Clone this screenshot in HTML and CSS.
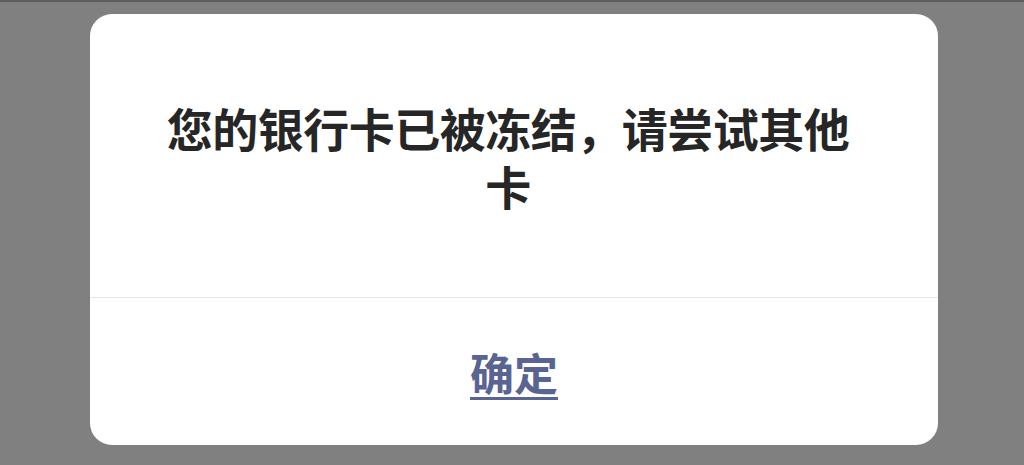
FILE: index.html
```html
<!DOCTYPE html>
<html lang="zh-CN">
<head>
<meta charset="utf-8">
<title>提示</title>
<link rel="stylesheet" href="styles.css">
</head>
<body>
<div class="screen">
  <div class="dialog">
    <div class="dialog-body">
      <p class="message">您的银行卡已被冻结，请尝试其他卡</p>
    </div>
    <div class="dialog-footer">
      <a class="confirm" href="#">确定</a>
    </div>
  </div>
</div>
</body>
</html>
```

FILE: styles.css
```css
html, body {
  margin: 0;
  padding: 0;
  height: 100%;
  background: #808080;
}
body {
  font-family: "Noto Sans CJK SC", "Noto Sans", sans-serif;
  border-top: 2px solid #5e5e5e;
  box-sizing: border-box;
}
.screen {
  padding: 12px 0 0 90px;
}
.dialog {
  width: 848px;
  height: 431px;
  background: #ffffff;
  border-radius: 22px;
  display: flex;
  flex-direction: column;
  overflow: hidden;
}
.dialog-body {
  height: 283px;
  display: flex;
  align-items: center;
  justify-content: center;
  padding: 0 78px 0 66px;
  border-bottom: 1px solid #e6e6e6;
}
.message {
  margin: 0;
  font-size: 46px;
  line-height: 58px;
  font-weight: 700;
  letter-spacing: -0.5px;
  color: #262626;
  text-align: center;
}
.dialog-footer {
  flex: 1;
  display: flex;
  align-items: center;
  justify-content: center;
}
.confirm {
  font-size: 44px;
  line-height: 50px;
  font-weight: 700;
  color: #5a6492;
  text-decoration: underline;
  text-decoration-thickness: 3px;
  text-underline-offset: 6px;
}
```
